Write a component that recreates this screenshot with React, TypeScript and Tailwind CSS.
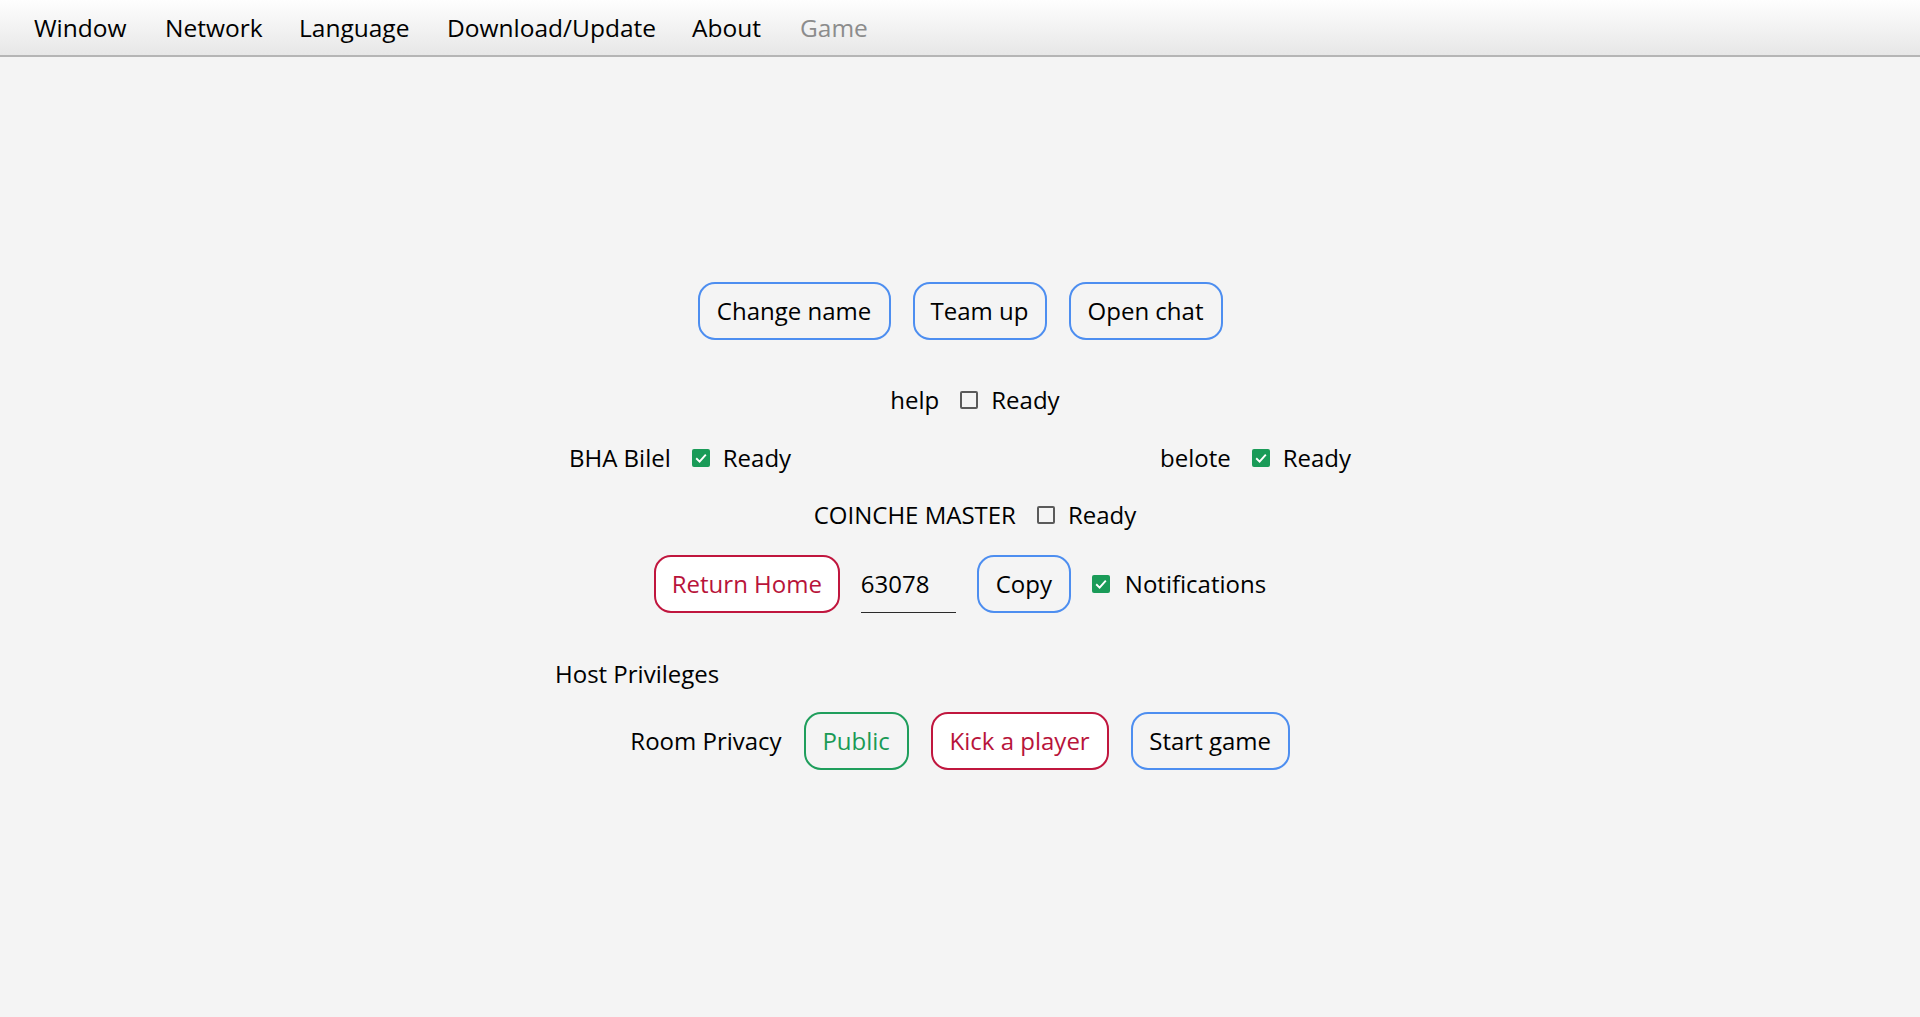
import React, { useState } from 'react';

const font = { fontFamily: '"Open Sans", "Noto Sans", sans-serif' };

const menuItems = [
  { label: 'Window', w: 'w-[131px]' },
  { label: 'Network', w: 'w-[134px]' },
  { label: 'Language', w: 'w-[148px]' },
  { label: 'Download/Update', w: 'w-[245px]' },
  { label: 'About', w: 'w-[108px]' },
];

function Check({ checked, onToggle }: { checked: boolean; onToggle?: () => void }) {
  if (checked) {
    return (
      <button
        type="button"
        onClick={onToggle}
        className="flex h-[18px] w-[18px] items-center justify-center rounded-[2px] bg-[#1a9b58]"
      >
        <svg viewBox="0 0 18 18" className="h-[18px] w-[18px]">
          <path d="M4.2 9.3 L7.6 12.6 L13.8 5.6" fill="none" stroke="#fff" strokeWidth="1.9" />
        </svg>
      </button>
    );
  }
  return (
    <button
      type="button"
      onClick={onToggle}
      className="h-[18px] w-[18px] rounded-[2px] border-2 border-[#5a5a5a] bg-transparent"
    />
  );
}

function Player({ name, ready }: { name: string; ready: boolean }) {
  return (
    <div className="flex items-center">
      <span className="mr-[21px]">{name}</span>
      <Check checked={ready} />
      <span className="ml-[13px]">Ready</span>
    </div>
  );
}

export default function App() {
  const [notify, setNotify] = useState(true);

  return (
    <div className="min-h-[1017px] bg-[#f4f4f4] text-[24px] text-black" style={font}>
      <nav className="flex h-[57px] items-center border-b-2 border-[#b5b5b5] bg-[linear-gradient(180deg,#fefefe,#e7e7e7)] pl-[34px] pt-[2px] text-[24.5px]">
        {menuItems.map((item) => (
          <span key={item.label} className={item.w}>
            {item.label}
          </span>
        ))}
        <span className="text-[#8c8c8c]">Game</span>
      </nav>

      <main className="flex flex-col items-center pt-[225px]">
        <div className="flex h-[58px] gap-[22px]">
          <button className="w-[193px] rounded-[17px] border-2 border-[#4d8ef0]">Change name</button>
          <button className="w-[134px] rounded-[17px] border-2 border-[#4d8ef0]">Team up</button>
          <button className="w-[154px] rounded-[17px] border-2 border-[#4d8ef0]">Open chat</button>
        </div>

        <div className="mt-[45px] flex h-[30px] items-center pl-[30px]">
          <Player name="help" ready={false} />
        </div>

        <div className="mt-[28px] flex h-[30px] w-[782px] items-center justify-between">
          <Player name="BHA Bilel" ready />
          <Player name="belote" ready />
        </div>

        <div className="mt-[27px] flex h-[30px] items-center pl-[30px]">
          <Player name="COINCHE MASTER" ready={false} />
        </div>

        <div className="mt-[25px] flex h-[58px] items-center gap-[21px]">
          <button className="h-[58px] w-[186px] rounded-[17px] border-2 border-[#c0163e] bg-white text-[#b8143a]">
            Return Home
          </button>
          <div className="flex h-[58px] w-[95px] items-center border-b border-[#2a2a2a]">
            <span>63078</span>
          </div>
          <button className="h-[58px] w-[94px] rounded-[17px] border-2 border-[#4d8ef0]">Copy</button>
          <div className="flex items-center">
            <Check checked={notify} onToggle={() => setNotify(!notify)} />
            <span className="ml-[15px]">Notifications</span>
          </div>
        </div>

        <div className="mt-[46px] flex h-[30px] w-[810px] items-center">
          <span>Host Privileges</span>
        </div>

        <div className="mt-[23px] flex h-[58px] items-center gap-[22px]">
          <span>Room Privacy</span>
          <button className="h-[58px] w-[105px] rounded-[17px] border-2 border-[#1f9e5c] text-[#1a9a55]">Public</button>
          <button className="h-[58px] w-[178px] rounded-[17px] border-2 border-[#c0163e] bg-white text-[#b8143a]">
            Kick a player
          </button>
          <button className="h-[58px] w-[159px] rounded-[17px] border-2 border-[#4d8ef0]">Start game</button>
        </div>
      </main>
    </div>
  );
}
